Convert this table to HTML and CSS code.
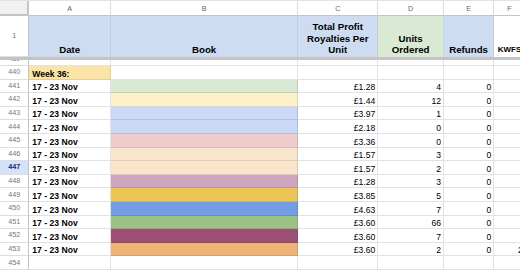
FILE: index.html
```html
<!DOCTYPE html>
<html lang="en">
<head>
    <meta charset="UTF-8">
    <title>Sales Sheet</title>
    <link rel="stylesheet" href="styles.css">
</head>
<body>
    <div class="sheet">
        <div class="row col-heads">
            <div class="corner"></div>
            <div class="colhead">A</div>
            <div class="colhead">B</div>
            <div class="colhead">C</div>
            <div class="colhead">D</div>
            <div class="colhead">E</div>
            <div class="colhead">F</div>
            <div class="colhead">G</div>
        </div>
        <div class="row hdr">
            <div class="cell rn">1</div>
            <div class="cell head blue">Date</div>
            <div class="cell head blue">Book</div>
            <div class="cell head blue">Total Profit Royalties Per Unit</div>
            <div class="cell head green">Units Ordered</div>
            <div class="cell head blue">Refunds</div>
            <div class="cell head small">KWFS</div>
            <div class="cell head"></div>
        </div>
        <div class="freeze"></div>
        <div class="clip">
            <div class="row data">
                <div class="cell rn">439</div>
                <div class="cell"></div><div class="cell"></div><div class="cell"></div>
                <div class="cell"></div><div class="cell"></div><div class="cell"></div><div class="cell"></div>
            </div>
        </div>
        <div class="row data">
            <div class="cell rn">440</div>
            <div class="cell bold week">Week 36:</div>
            <div class="cell"></div><div class="cell"></div><div class="cell"></div>
            <div class="cell"></div><div class="cell"></div><div class="cell"></div>
        </div>
        <div class="row data">
            <div class="cell rn">441</div>
            <div class="cell bold">17 - 23 Nov</div>
            <div class="cell fill" style="background:#d9e9d3"></div>
            <div class="cell num">£1.28</div><div class="cell num">4</div><div class="cell num">0</div>
            <div class="cell"></div><div class="cell"></div>
        </div>
        <div class="row data">
            <div class="cell rn">442</div>
            <div class="cell bold">17 - 23 Nov</div>
            <div class="cell fill" style="background:#fdf1cc"></div>
            <div class="cell num">£1.44</div><div class="cell num">12</div><div class="cell num">0</div>
            <div class="cell"></div><div class="cell"></div>
        </div>
        <div class="row data">
            <div class="cell rn">443</div>
            <div class="cell bold">17 - 23 Nov</div>
            <div class="cell fill" style="background:#c9d9f6"></div>
            <div class="cell num">£3.97</div><div class="cell num">1</div><div class="cell num">0</div>
            <div class="cell"></div><div class="cell"></div>
        </div>
        <div class="row data">
            <div class="cell rn">444</div>
            <div class="cell bold">17 - 23 Nov</div>
            <div class="cell fill" style="background:#c9d9f6"></div>
            <div class="cell num">£2.18</div><div class="cell num">0</div><div class="cell num">0</div>
            <div class="cell"></div><div class="cell"></div>
        </div>
        <div class="row data">
            <div class="cell rn">445</div>
            <div class="cell bold">17 - 23 Nov</div>
            <div class="cell fill" style="background:#f0cbcb"></div>
            <div class="cell num">£3.36</div><div class="cell num">0</div><div class="cell num">0</div>
            <div class="cell"></div><div class="cell"></div>
        </div>
        <div class="row data">
            <div class="cell rn">446</div>
            <div class="cell bold">17 - 23 Nov</div>
            <div class="cell fill" style="background:#f9e4cc"></div>
            <div class="cell num">£1.57</div><div class="cell num">3</div><div class="cell num">0</div>
            <div class="cell"></div><div class="cell"></div>
        </div>
        <div class="row data">
            <div class="cell rn sel">447</div>
            <div class="cell bold">17 - 23 Nov</div>
            <div class="cell fill" style="background:#f9e4cc"></div>
            <div class="cell num">£1.57</div><div class="cell num">2</div><div class="cell num">0</div>
            <div class="cell"></div><div class="cell"></div>
        </div>
        <div class="row data">
            <div class="cell rn">448</div>
            <div class="cell bold">17 - 23 Nov</div>
            <div class="cell fill" style="background:#cfa6c0"></div>
            <div class="cell num">£1.28</div><div class="cell num">3</div><div class="cell num">0</div>
            <div class="cell"></div><div class="cell"></div>
        </div>
        <div class="row data">
            <div class="cell rn">449</div>
            <div class="cell bold">17 - 23 Nov</div>
            <div class="cell fill" style="background:#ebc656"></div>
            <div class="cell num">£3.85</div><div class="cell num">5</div><div class="cell num">0</div>
            <div class="cell"></div><div class="cell"></div>
        </div>
        <div class="row data">
            <div class="cell rn">450</div>
            <div class="cell bold">17 - 23 Nov</div>
            <div class="cell fill" style="background:#739de4"></div>
            <div class="cell num">£4.63</div><div class="cell num">7</div><div class="cell num">0</div>
            <div class="cell"></div><div class="cell"></div>
        </div>
        <div class="row data">
            <div class="cell rn">451</div>
            <div class="cell bold">17 - 23 Nov</div>
            <div class="cell fill" style="background:#9cc385"></div>
            <div class="cell num">£3.60</div><div class="cell num">66</div><div class="cell num">0</div>
            <div class="cell"></div><div class="cell"></div>
        </div>
        <div class="row data">
            <div class="cell rn">452</div>
            <div class="cell bold">17 - 23 Nov</div>
            <div class="cell fill" style="background:#9d5076"></div>
            <div class="cell num">£3.60</div><div class="cell num">7</div><div class="cell num">0</div>
            <div class="cell"></div><div class="cell"></div>
        </div>
        <div class="row data">
            <div class="cell rn">453</div>
            <div class="cell bold">17 - 23 Nov</div>
            <div class="cell fill" style="background:#eeb477"></div>
            <div class="cell num">£3.60</div><div class="cell num">2</div><div class="cell num">0</div>
            <div class="cell num">2</div><div class="cell"></div>
        </div>
        <div class="row data">
            <div class="cell rn">454</div>
            <div class="cell"></div><div class="cell"></div><div class="cell"></div>
            <div class="cell"></div><div class="cell"></div><div class="cell"></div><div class="cell"></div>
        </div>
    </div>
</body>
</html>
```

FILE: styles.css
```css
body {
    margin: 0;
    background: #fff;
    font-family: "Liberation Sans", Arial, sans-serif;
    color: #000;
    overflow: hidden;
}
.sheet {
    width: 620px;
}
.row {
    display: grid;
    grid-template-columns: 29.3px 81.7px 187.3px 80px 65.7px 50.3px 31.4px 80px;
}
.col-heads {
    height: 16px;
    box-sizing: border-box;
    border-top: 1px solid #e3e3e3;
}
.corner {
    background: #f1f1f1;
    border-right: 2px solid #c4c4c4;
    border-bottom: 2px solid #c4c4c4;
    box-sizing: border-box;
}
.colhead {
    display: flex;
    align-items: center;
    justify-content: center;
    font-size: 7.2px;
    color: #666;
    border-right: 1px solid #dcdcdc;
    border-bottom: 1px solid #c4c4c4;
    box-sizing: border-box;
}
.cell {
    display: flex;
    align-items: flex-end;
    box-sizing: border-box;
    border-right: 1px solid #e2e2e2;
    border-bottom: 1px solid #e2e2e2;
    padding: 0 2px 0 3px;
    overflow: hidden;
    white-space: nowrap;
    font-size: 8.6px;
    line-height: 10px;
}
.rn {
    align-items: center;
    justify-content: center;
    padding: 0;
    font-size: 7.2px;
    color: #777;
    border-right-color: #c4c4c4;
    border-bottom-color: #dedede;
}
.sel {
    background: #d6e2fb;
    color: #0b2e6b;
    font-weight: bold;
}
.hdr {
    height: 40.7px;
}
.head {
    justify-content: center;
    text-align: center;
    white-space: normal;
    font-weight: bold;
    font-size: 9.7px;
    line-height: 11.7px;
    padding: 0 2px 0.5px;
    border-bottom: none;
}
.blue {
    background: #cddcf1;
    border-right-color: #c3cfdf;
}
.green {
    background: #d9e9d3;
    border-right-color: #cad9c5;
}
.small {
    font-size: 8px;
}
.freeze {
    height: 3.3px;
    background: #c4c4c4;
}
.clip {
    height: 6px;
    overflow: hidden;
    display: flex;
    flex-direction: column;
    justify-content: flex-end;
}
.data {
    height: 13.6px;
    flex-shrink: 0;
}
.bold {
    font-weight: bold;
}
.week {
    background: #fbe5a6;
    border-right-color: #e6cf8e;
    border-bottom-color: #e6cf8e;
}
.fill {
    border-right-color: rgba(0, 0, 0, 0.12);
    border-bottom-color: rgba(0, 0, 0, 0.1);
}
.num {
    justify-content: flex-end;
}
```
